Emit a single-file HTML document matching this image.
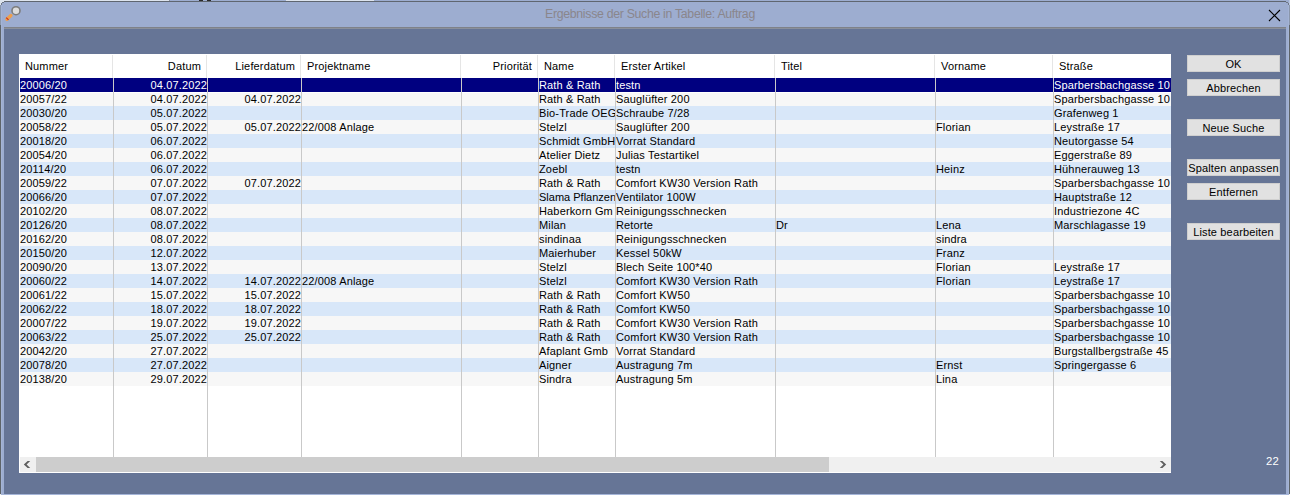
<!DOCTYPE html>
<html><head><meta charset="utf-8">
<style>
*{margin:0;padding:0;box-sizing:border-box}
html,body{width:1290px;height:495px;overflow:hidden;background:#9dadd0}
body{position:relative;font-family:"Liberation Sans",sans-serif;font-size:11px;letter-spacing:0.15px;color:#000}
.a{position:absolute}
.c{position:absolute;height:14px;line-height:14px;white-space:nowrap;overflow:hidden}
.r{text-align:right}
.hd{position:absolute;top:54px;height:24px;line-height:24px;white-space:nowrap}
.btn{position:absolute;left:1187px;width:93px;height:17px;background:#e1e1e1;border:1px solid #cfcfcf;text-align:center;line-height:15px;padding-top:1px;white-space:nowrap;font-size:11px;color:#000}
</style></head><body>

<div class="a" style="left:0px;top:0px;width:169px;height:1px;background:#dde4ee"></div>
<div class="a" style="left:169px;top:0px;width:1px;height:1px;background:#8a919c"></div>
<div class="a" style="left:199px;top:0px;width:4px;height:1px;background:#2a2a2a"></div>
<div class="a" style="left:207px;top:0px;width:4px;height:1px;background:#2a2a2a"></div>
<div class="a" style="left:286px;top:0px;width:88px;height:1px;background:#dde4ee"></div>
<div class="a" style="left:0px;top:1px;width:4px;height:1px;background:#dde4ee"></div>
<div class="a" style="left:0px;top:2px;width:2px;height:1px;background:#dde4ee"></div>
<div class="a" style="left:0px;top:3px;width:1px;height:2px;background:#dde4ee"></div>
<div class="a" style="left:4px;top:1px;width:1282px;height:1px;background:#5f6670"></div>
<div class="a" style="left:2px;top:2px;width:2px;height:1px;background:#6f7888"></div>
<div class="a" style="left:1px;top:3px;width:1px;height:2px;background:#6f7888"></div>
<div class="a" style="left:1286px;top:2px;width:2px;height:1px;background:#6f7888"></div>
<div class="a" style="left:1288px;top:3px;width:1px;height:2px;background:#6f7888"></div>
<div class="a" style="left:1289px;top:0px;width:1px;height:5px;background:#b9c6de"></div>
<div class="a" style="left:0px;top:5px;width:1px;height:20px;background:#8a96ab"></div>
<div class="a" style="left:0px;top:25px;width:1px;height:469px;background:#5e6469"></div>
<div class="a" style="left:1px;top:5px;width:1px;height:489px;background:#a4b4d6"></div>
<div class="a" style="left:1289px;top:5px;width:1px;height:20px;background:#8a96ab"></div>
<div class="a" style="left:1289px;top:25px;width:1px;height:469px;background:#5e6469"></div>
<div class="a" style="left:1288px;top:5px;width:1px;height:489px;background:#a4b4d6"></div>
<div class="a" style="left:1px;top:494px;width:1288px;height:1px;background:#a5b5d8"></div>
<div class="a" style="left:0px;top:494px;width:1px;height:1px;background:#f0f0f0"></div>
<div class="a" style="left:1289px;top:494px;width:1px;height:1px;background:#f0f0f0"></div>
<div class="a" style="left:4px;top:27px;width:1282px;height:1px;background:#7f8289"></div>
<div class="a" style="left:4px;top:28px;width:1282px;height:1px;background:#8a909c"></div>
<div class="a" style="left:4px;top:29px;width:1282px;height:465px;background:#667596"></div>
<div class="a" style="left:545px;top:7px;font-size:12.3px;line-height:14px;letter-spacing:-0.3px;color:#8a868c;white-space:nowrap">Ergebnisse der Suche in Tabelle: Auftrag</div>
<svg class="a" style="left:0;top:0" width="30" height="28" viewBox="0 0 30 28">
<line x1="6.9" y1="19.3" x2="10.9" y2="15.5" stroke="#ee9f4e" stroke-width="3.4" stroke-linecap="round"/>
<line x1="6.2" y1="17.6" x2="8.5" y2="19.9" stroke="#c8301e" stroke-width="1.2"/>
<circle cx="16" cy="10.7" r="4" fill="#dcdcdc" stroke="#7c7c7c" stroke-width="1.6"/>
</svg>
<svg class="a" style="left:1268px;top:9px" width="13" height="13" viewBox="0 0 13 13">
<path d="M1 1 L12 12 M12 1 L1 12" stroke="#000" stroke-width="1.1"/>
</svg>
<div class="a" style="left:19px;top:54px;width:1152px;height:419px;background:#fff"></div>
<div class="a" style="left:20px;top:78px;width:1151px;height:14px;background:#000080"></div>
<div class="a" style="left:20px;top:92px;width:1151px;height:14px;background:#f7f7f7"></div>
<div class="a" style="left:20px;top:106px;width:1151px;height:14px;background:#d8e7f9"></div>
<div class="a" style="left:20px;top:120px;width:1151px;height:14px;background:#f7f7f7"></div>
<div class="a" style="left:20px;top:134px;width:1151px;height:14px;background:#d8e7f9"></div>
<div class="a" style="left:20px;top:148px;width:1151px;height:14px;background:#f7f7f7"></div>
<div class="a" style="left:20px;top:162px;width:1151px;height:14px;background:#d8e7f9"></div>
<div class="a" style="left:20px;top:176px;width:1151px;height:14px;background:#f7f7f7"></div>
<div class="a" style="left:20px;top:190px;width:1151px;height:14px;background:#d8e7f9"></div>
<div class="a" style="left:20px;top:204px;width:1151px;height:14px;background:#f7f7f7"></div>
<div class="a" style="left:20px;top:218px;width:1151px;height:14px;background:#d8e7f9"></div>
<div class="a" style="left:20px;top:232px;width:1151px;height:14px;background:#f7f7f7"></div>
<div class="a" style="left:20px;top:246px;width:1151px;height:14px;background:#d8e7f9"></div>
<div class="a" style="left:20px;top:260px;width:1151px;height:14px;background:#f7f7f7"></div>
<div class="a" style="left:20px;top:274px;width:1151px;height:14px;background:#d8e7f9"></div>
<div class="a" style="left:20px;top:288px;width:1151px;height:14px;background:#f7f7f7"></div>
<div class="a" style="left:20px;top:302px;width:1151px;height:14px;background:#d8e7f9"></div>
<div class="a" style="left:20px;top:316px;width:1151px;height:14px;background:#f7f7f7"></div>
<div class="a" style="left:20px;top:330px;width:1151px;height:14px;background:#d8e7f9"></div>
<div class="a" style="left:20px;top:344px;width:1151px;height:14px;background:#f7f7f7"></div>
<div class="a" style="left:20px;top:358px;width:1151px;height:14px;background:#d8e7f9"></div>
<div class="a" style="left:20px;top:372px;width:1151px;height:14px;background:#f7f7f7"></div>
<div class="a" style="left:20px;top:92px;width:1151px;height:1px;background:#fff"></div>
<div class="a" style="left:113px;top:78px;width:1px;height:379px;background:#c9c9c9"></div>
<div class="a" style="left:207px;top:78px;width:1px;height:379px;background:#c9c9c9"></div>
<div class="a" style="left:301px;top:78px;width:1px;height:379px;background:#c9c9c9"></div>
<div class="a" style="left:461px;top:78px;width:1px;height:379px;background:#c9c9c9"></div>
<div class="a" style="left:538px;top:78px;width:1px;height:379px;background:#c9c9c9"></div>
<div class="a" style="left:615px;top:78px;width:1px;height:379px;background:#c9c9c9"></div>
<div class="a" style="left:775px;top:78px;width:1px;height:379px;background:#c9c9c9"></div>
<div class="a" style="left:935px;top:78px;width:1px;height:379px;background:#c9c9c9"></div>
<div class="a" style="left:1053px;top:78px;width:1px;height:379px;background:#c9c9c9"></div>
<div class="a" style="left:112px;top:55px;width:1px;height:23px;background:#e5e5e5"></div>
<div class="a" style="left:206px;top:55px;width:1px;height:23px;background:#e5e5e5"></div>
<div class="a" style="left:300px;top:55px;width:1px;height:23px;background:#e5e5e5"></div>
<div class="a" style="left:460px;top:55px;width:1px;height:23px;background:#e5e5e5"></div>
<div class="a" style="left:537px;top:55px;width:1px;height:23px;background:#e5e5e5"></div>
<div class="a" style="left:614px;top:55px;width:1px;height:23px;background:#e5e5e5"></div>
<div class="a" style="left:774px;top:55px;width:1px;height:23px;background:#e5e5e5"></div>
<div class="a" style="left:934px;top:55px;width:1px;height:23px;background:#e5e5e5"></div>
<div class="a" style="left:1052px;top:55px;width:1px;height:23px;background:#e5e5e5"></div>
<div class="hd" style="left:25px">Nummer</div>
<div class="hd r" style="left:114px;width:87px">Datum</div>
<div class="hd r" style="left:208px;width:87px">Lieferdatum</div>
<div class="hd" style="left:307px">Projektname</div>
<div class="hd r" style="left:462px;width:70px">Priorität</div>
<div class="hd" style="left:544px">Name</div>
<div class="hd" style="left:621px">Erster Artikel</div>
<div class="hd" style="left:781px">Titel</div>
<div class="hd" style="left:941px">Vorname</div>
<div class="hd" style="left:1059px">Straße</div>
<div class="c" style="left:20px;top:78px;width:93px;color:#fff">20006/20</div>
<div class="c r" style="left:114px;top:78px;width:93px;color:#fff">04.07.2022</div>
<div class="c" style="left:539px;top:78px;width:76px;color:#fff">Rath &amp; Rath</div>
<div class="c" style="left:616px;top:78px;width:159px;color:#fff">testn</div>
<div class="c" style="left:1054px;top:78px;width:117px;color:#fff">Sparbersbachgasse 10</div>
<div class="c" style="left:20px;top:92px;width:93px;color:#000">20057/22</div>
<div class="c r" style="left:114px;top:92px;width:93px;color:#000">04.07.2022</div>
<div class="c r" style="left:208px;top:92px;width:93px;color:#000">04.07.2022</div>
<div class="c" style="left:539px;top:92px;width:76px;color:#000">Rath &amp; Rath</div>
<div class="c" style="left:616px;top:92px;width:159px;color:#000">Sauglüfter 200</div>
<div class="c" style="left:1054px;top:92px;width:117px;color:#000">Sparbersbachgasse 10</div>
<div class="c" style="left:20px;top:106px;width:93px;color:#000">20030/20</div>
<div class="c r" style="left:114px;top:106px;width:93px;color:#000">05.07.2022</div>
<div class="c" style="left:539px;top:106px;width:76px;color:#000">Bio-Trade OEG</div>
<div class="c" style="left:616px;top:106px;width:159px;color:#000">Schraube 7/28</div>
<div class="c" style="left:1054px;top:106px;width:117px;color:#000">Grafenweg 1</div>
<div class="c" style="left:20px;top:120px;width:93px;color:#000">20058/22</div>
<div class="c r" style="left:114px;top:120px;width:93px;color:#000">05.07.2022</div>
<div class="c r" style="left:208px;top:120px;width:93px;color:#000">05.07.2022</div>
<div class="c" style="left:302px;top:120px;width:159px;color:#000">22/008 Anlage</div>
<div class="c" style="left:539px;top:120px;width:76px;color:#000">Stelzl</div>
<div class="c" style="left:616px;top:120px;width:159px;color:#000">Sauglüfter 200</div>
<div class="c" style="left:936px;top:120px;width:117px;color:#000">Florian</div>
<div class="c" style="left:1054px;top:120px;width:117px;color:#000">Leystraße 17</div>
<div class="c" style="left:20px;top:134px;width:93px;color:#000">20018/20</div>
<div class="c r" style="left:114px;top:134px;width:93px;color:#000">06.07.2022</div>
<div class="c" style="left:539px;top:134px;width:76px;color:#000">Schmidt GmbH</div>
<div class="c" style="left:616px;top:134px;width:159px;color:#000">Vorrat Standard</div>
<div class="c" style="left:1054px;top:134px;width:117px;color:#000">Neutorgasse 54</div>
<div class="c" style="left:20px;top:148px;width:93px;color:#000">20054/20</div>
<div class="c r" style="left:114px;top:148px;width:93px;color:#000">06.07.2022</div>
<div class="c" style="left:539px;top:148px;width:76px;color:#000">Atelier Dietz</div>
<div class="c" style="left:616px;top:148px;width:159px;color:#000">Julias Testartikel</div>
<div class="c" style="left:1054px;top:148px;width:117px;color:#000">Eggerstraße 89</div>
<div class="c" style="left:20px;top:162px;width:93px;color:#000">20114/20</div>
<div class="c r" style="left:114px;top:162px;width:93px;color:#000">06.07.2022</div>
<div class="c" style="left:539px;top:162px;width:76px;color:#000">Zoebl</div>
<div class="c" style="left:616px;top:162px;width:159px;color:#000">testn</div>
<div class="c" style="left:936px;top:162px;width:117px;color:#000">Heinz</div>
<div class="c" style="left:1054px;top:162px;width:117px;color:#000">Hühnerauweg 13</div>
<div class="c" style="left:20px;top:176px;width:93px;color:#000">20059/22</div>
<div class="c r" style="left:114px;top:176px;width:93px;color:#000">07.07.2022</div>
<div class="c r" style="left:208px;top:176px;width:93px;color:#000">07.07.2022</div>
<div class="c" style="left:539px;top:176px;width:76px;color:#000">Rath &amp; Rath</div>
<div class="c" style="left:616px;top:176px;width:159px;color:#000">Comfort KW30 Version Rath</div>
<div class="c" style="left:1054px;top:176px;width:117px;color:#000">Sparbersbachgasse 10</div>
<div class="c" style="left:20px;top:190px;width:93px;color:#000">20066/20</div>
<div class="c r" style="left:114px;top:190px;width:93px;color:#000">07.07.2022</div>
<div class="c" style="left:539px;top:190px;width:76px;color:#000;letter-spacing:0">Slama Pflanzen</div>
<div class="c" style="left:616px;top:190px;width:159px;color:#000">Ventilator 100W</div>
<div class="c" style="left:1054px;top:190px;width:117px;color:#000">Hauptstraße 12</div>
<div class="c" style="left:20px;top:204px;width:93px;color:#000">20102/20</div>
<div class="c r" style="left:114px;top:204px;width:93px;color:#000">08.07.2022</div>
<div class="c" style="left:539px;top:204px;width:76px;color:#000">Haberkorn Gm</div>
<div class="c" style="left:616px;top:204px;width:159px;color:#000">Reinigungsschnecken</div>
<div class="c" style="left:1054px;top:204px;width:117px;color:#000">Industriezone 4C</div>
<div class="c" style="left:20px;top:218px;width:93px;color:#000">20126/20</div>
<div class="c r" style="left:114px;top:218px;width:93px;color:#000">08.07.2022</div>
<div class="c" style="left:539px;top:218px;width:76px;color:#000">Milan</div>
<div class="c" style="left:616px;top:218px;width:159px;color:#000">Retorte</div>
<div class="c" style="left:776px;top:218px;width:159px;color:#000">Dr</div>
<div class="c" style="left:936px;top:218px;width:117px;color:#000">Lena</div>
<div class="c" style="left:1054px;top:218px;width:117px;color:#000">Marschlagasse 19</div>
<div class="c" style="left:20px;top:232px;width:93px;color:#000">20162/20</div>
<div class="c r" style="left:114px;top:232px;width:93px;color:#000">08.07.2022</div>
<div class="c" style="left:539px;top:232px;width:76px;color:#000">sindinaa</div>
<div class="c" style="left:616px;top:232px;width:159px;color:#000">Reinigungsschnecken</div>
<div class="c" style="left:936px;top:232px;width:117px;color:#000">sindra</div>
<div class="c" style="left:20px;top:246px;width:93px;color:#000">20150/20</div>
<div class="c r" style="left:114px;top:246px;width:93px;color:#000">12.07.2022</div>
<div class="c" style="left:539px;top:246px;width:76px;color:#000">Maierhuber</div>
<div class="c" style="left:616px;top:246px;width:159px;color:#000">Kessel 50kW</div>
<div class="c" style="left:936px;top:246px;width:117px;color:#000">Franz</div>
<div class="c" style="left:20px;top:260px;width:93px;color:#000">20090/20</div>
<div class="c r" style="left:114px;top:260px;width:93px;color:#000">13.07.2022</div>
<div class="c" style="left:539px;top:260px;width:76px;color:#000">Stelzl</div>
<div class="c" style="left:616px;top:260px;width:159px;color:#000">Blech Seite 100*40</div>
<div class="c" style="left:936px;top:260px;width:117px;color:#000">Florian</div>
<div class="c" style="left:1054px;top:260px;width:117px;color:#000">Leystraße 17</div>
<div class="c" style="left:20px;top:274px;width:93px;color:#000">20060/22</div>
<div class="c r" style="left:114px;top:274px;width:93px;color:#000">14.07.2022</div>
<div class="c r" style="left:208px;top:274px;width:93px;color:#000">14.07.2022</div>
<div class="c" style="left:302px;top:274px;width:159px;color:#000">22/008 Anlage</div>
<div class="c" style="left:539px;top:274px;width:76px;color:#000">Stelzl</div>
<div class="c" style="left:616px;top:274px;width:159px;color:#000">Comfort KW30 Version Rath</div>
<div class="c" style="left:936px;top:274px;width:117px;color:#000">Florian</div>
<div class="c" style="left:1054px;top:274px;width:117px;color:#000">Leystraße 17</div>
<div class="c" style="left:20px;top:288px;width:93px;color:#000">20061/22</div>
<div class="c r" style="left:114px;top:288px;width:93px;color:#000">15.07.2022</div>
<div class="c r" style="left:208px;top:288px;width:93px;color:#000">15.07.2022</div>
<div class="c" style="left:539px;top:288px;width:76px;color:#000">Rath &amp; Rath</div>
<div class="c" style="left:616px;top:288px;width:159px;color:#000">Comfort KW50</div>
<div class="c" style="left:1054px;top:288px;width:117px;color:#000">Sparbersbachgasse 10</div>
<div class="c" style="left:20px;top:302px;width:93px;color:#000">20062/22</div>
<div class="c r" style="left:114px;top:302px;width:93px;color:#000">18.07.2022</div>
<div class="c r" style="left:208px;top:302px;width:93px;color:#000">18.07.2022</div>
<div class="c" style="left:539px;top:302px;width:76px;color:#000">Rath &amp; Rath</div>
<div class="c" style="left:616px;top:302px;width:159px;color:#000">Comfort KW50</div>
<div class="c" style="left:1054px;top:302px;width:117px;color:#000">Sparbersbachgasse 10</div>
<div class="c" style="left:20px;top:316px;width:93px;color:#000">20007/22</div>
<div class="c r" style="left:114px;top:316px;width:93px;color:#000">19.07.2022</div>
<div class="c r" style="left:208px;top:316px;width:93px;color:#000">19.07.2022</div>
<div class="c" style="left:539px;top:316px;width:76px;color:#000">Rath &amp; Rath</div>
<div class="c" style="left:616px;top:316px;width:159px;color:#000">Comfort KW30 Version Rath</div>
<div class="c" style="left:1054px;top:316px;width:117px;color:#000">Sparbersbachgasse 10</div>
<div class="c" style="left:20px;top:330px;width:93px;color:#000">20063/22</div>
<div class="c r" style="left:114px;top:330px;width:93px;color:#000">25.07.2022</div>
<div class="c r" style="left:208px;top:330px;width:93px;color:#000">25.07.2022</div>
<div class="c" style="left:539px;top:330px;width:76px;color:#000">Rath &amp; Rath</div>
<div class="c" style="left:616px;top:330px;width:159px;color:#000">Comfort KW30 Version Rath</div>
<div class="c" style="left:1054px;top:330px;width:117px;color:#000">Sparbersbachgasse 10</div>
<div class="c" style="left:20px;top:344px;width:93px;color:#000">20042/20</div>
<div class="c r" style="left:114px;top:344px;width:93px;color:#000">27.07.2022</div>
<div class="c" style="left:539px;top:344px;width:76px;color:#000">Afaplant Gmb</div>
<div class="c" style="left:616px;top:344px;width:159px;color:#000">Vorrat Standard</div>
<div class="c" style="left:1054px;top:344px;width:117px;color:#000">Burgstallbergstraße 45</div>
<div class="c" style="left:20px;top:358px;width:93px;color:#000">20078/20</div>
<div class="c r" style="left:114px;top:358px;width:93px;color:#000">27.07.2022</div>
<div class="c" style="left:539px;top:358px;width:76px;color:#000">Aigner</div>
<div class="c" style="left:616px;top:358px;width:159px;color:#000">Austragung 7m</div>
<div class="c" style="left:936px;top:358px;width:117px;color:#000">Ernst</div>
<div class="c" style="left:1054px;top:358px;width:117px;color:#000">Springergasse 6</div>
<div class="c" style="left:20px;top:372px;width:93px;color:#000">20138/20</div>
<div class="c r" style="left:114px;top:372px;width:93px;color:#000">29.07.2022</div>
<div class="c" style="left:539px;top:372px;width:76px;color:#000">Sindra</div>
<div class="c" style="left:616px;top:372px;width:159px;color:#000">Austragung 5m</div>
<div class="c" style="left:936px;top:372px;width:117px;color:#000">Lina</div>
<div class="a" style="left:20px;top:457px;width:1151px;height:15px;background:#f0f0f0"></div>
<div class="a" style="left:36px;top:457px;width:793px;height:15px;background:#cdcdcd"></div>
<svg class="a" style="left:20px;top:457px" width="16" height="15" viewBox="0 0 16 15"><path d="M3.8 7.5 L7.6 4 L10.2 4 L6.6 7.5 L10.2 11 L7.6 11 Z" fill="#606060"/></svg>
<svg class="a" style="left:1154px;top:457px" width="16" height="15" viewBox="0 0 16 15"><path d="M12.2 7.5 L8.4 4 L5.8 4 L9.4 7.5 L5.8 11 L8.4 11 Z" fill="#606060"/></svg>
<div class="btn" style="top:55px">OK</div>
<div class="btn" style="top:79px">Abbrechen</div>
<div class="btn" style="top:119px">Neue Suche</div>
<div class="btn" style="top:159px">Spalten anpassen</div>
<div class="btn" style="top:183px">Entfernen</div>
<div class="btn" style="top:223px">Liste bearbeiten</div>
<div class="a" style="left:1266px;top:454px;color:#fff;line-height:14px;font-size:11.3px">22</div>
</body></html>
